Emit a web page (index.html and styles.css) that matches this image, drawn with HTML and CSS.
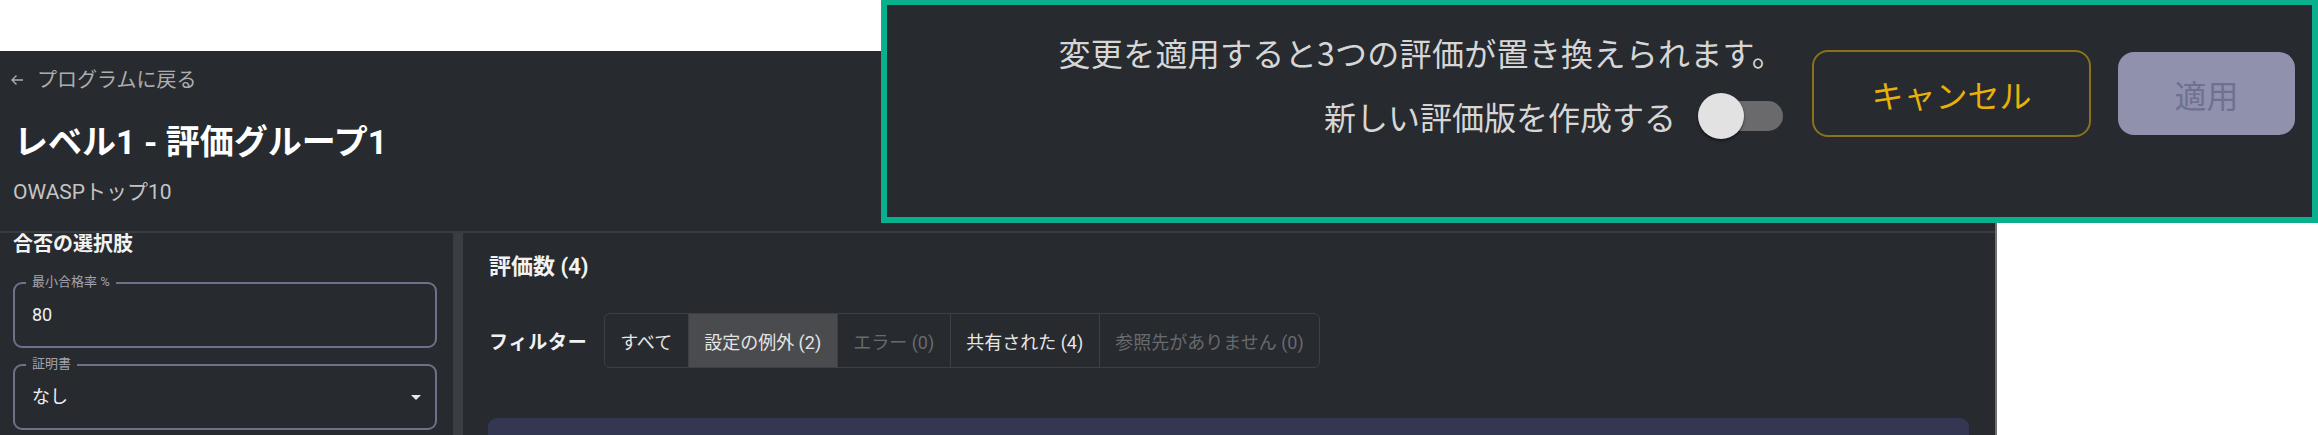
FILE: index.html
```html
<!DOCTYPE html>
<html lang="ja">
<head>
<meta charset="utf-8">
<title>レベル1 - 評価グループ1</title>
<link rel="stylesheet" href="styles.css">
</head>
<body>
<div class="stage">
  <div class="page">
    <header class="page-header">
      <a class="back-link" href="#">
        <svg class="back-arrow" width="14" height="14" viewBox="0 0 14 14" aria-hidden="true"><path d="M13 7H2M6.5 2.5L2 7l4.5 4.5" fill="none" stroke="currentColor" stroke-width="1.4"/></svg>
        <span>プログラムに戻る</span>
      </a>
      <h1 class="title">レベル1 - 評価グループ1</h1>
      <div class="subtitle">OWASPトップ10</div>
    </header>
    <div class="content">
      <aside class="left-col">
        <h2 class="section-title">合否の選択肢</h2>
        <div class="field">
          <span class="field-label">最小合格率 %</span>
          <span class="field-value">80</span>
        </div>
        <div class="field field-select">
          <span class="field-label">証明書</span>
          <span class="field-value">なし</span>
          <svg class="caret" width="10" height="5" viewBox="0 0 10 5" aria-hidden="true"><path d="M0 0h10L5 5z" fill="currentColor"/></svg>
        </div>
      </aside>
      <div class="splitter"></div>
      <main class="right-col">
        <h2 class="count-title">評価数 (4)</h2>
        <div class="filter-row">
          <span class="filter-label">フィルター</span>
          <div class="seg-group">
            <span class="seg">すべて</span>
            <span class="seg seg-selected">設定の例外 (2)</span>
            <span class="seg seg-disabled">エラー (0)</span>
            <span class="seg">共有された (4)</span>
            <span class="seg seg-disabled">参照先がありません (0)</span>
          </div>
        </div>
        <div class="card"></div>
      </main>
    </div>
  </div>

  <div class="callout">
    <div class="callout-text">
      <div class="callout-line callout-line-first">変更を適用すると3つの評価が置き換えられます。</div>
      <div class="callout-toggle-row">
        <span class="callout-line">新しい評価版を作成する</span>
        <span class="switch"><span class="switch-track"></span><span class="switch-thumb"></span></span>
      </div>
    </div>
    <button class="btn btn-cancel">キャンセル</button>
    <button class="btn btn-apply" disabled>適用</button>
  </div>
</div>
</body>
</html>
```

FILE: styles.css
```css
* { box-sizing: border-box; }

html, body {
  margin: 0;
  padding: 0;
  background: #ffffff;
}

body {
  width: 2318px;
  height: 435px;
  overflow: hidden;
  font-family: Roboto, "Noto Sans CJK JP", sans-serif;
}

.stage {
  position: relative;
  width: 2318px;
  height: 435px;
  padding-top: 51px;
}

.page {
  width: 1997px;
  height: 384px;
  background: #272a2f;
  border-right: 2px solid #6f7175;
  display: flex;
  flex-direction: column;
  overflow: hidden;
}

/* header */
.page-header {
  height: 182px;
  padding: 16px 0 0 10px;
  border-bottom: 2px solid #393c41;
  flex: none;
}

.back-link {
  display: flex;
  align-items: center;
  gap: 13px;
  color: #adadad;
  text-decoration: none;
  font-size: 20px;
  line-height: 26px;
}

.back-arrow { display: block; }

.title {
  margin: 28px 0 0 4px;
  font-size: 34px;
  line-height: 42px;
  font-weight: 700;
  color: #ffffff;
}

.subtitle {
  margin: 16px 0 0 3px;
  font-size: 21px;
  line-height: 26px;
  color: #c4c4c4;
}

/* content */
.content {
  flex: 1;
  display: flex;
  min-height: 0;
}

.left-col {
  width: 453px;
  flex: none;
  padding: 0 16px 0 13px;
}

.section-title {
  margin: 0;
  font-size: 20px;
  line-height: 22px;
  font-weight: 700;
  color: #f2f2f2;
}

.field {
  position: relative;
  height: 66px;
  margin-top: 27px;
  border: 2px solid #6f7189;
  border-radius: 9px;
  display: flex;
  align-items: center;
  padding: 0 14px 0 17px;
}

.field + .field { margin-top: 16px; }

.field-label {
  position: absolute;
  top: -10px;
  left: 11px;
  padding: 0 6px;
  background: #272a2f;
  font-size: 13px;
  line-height: 16px;
  color: #a3a4ad;
}

.field-value {
  flex: 1;
  font-size: 18px;
  line-height: 24px;
  color: #f0f0f0;
}

.caret {
  display: block;
  color: #e8e8e8;
}

.splitter {
  width: 10px;
  flex: none;
  background: #3a3d42;
}

.right-col {
  flex: 1;
  padding: 20px 26px 0 25px;
}

.count-title {
  margin: 0 0 0 1px;
  font-size: 22px;
  line-height: 28px;
  font-weight: 700;
  color: #f2f2f2;
}

.filter-row {
  margin-top: 32px;
  display: flex;
  align-items: center;
  gap: 16px;
  padding-left: 1px;
}

.filter-label {
  font-size: 19px;
  font-weight: 700;
  color: #f2f2f2;
  letter-spacing: 0.8px;
}

.seg-group {
  display: flex;
  height: 55px;
  border: 1px solid #3d4045;
  border-radius: 6px;
  overflow: hidden;
}

.seg {
  display: flex;
  align-items: center;
  padding: 0 15.5px;
  font-size: 18px;
  color: #e6e6e6;
  border-left: 1px solid #3d4045;
}

.seg:first-child { border-left: none; }

.seg-selected {
  background: #4a4b4f;
  color: #e4e4e4;
}

.seg-disabled { color: #676a6e; }

.card {
  margin-top: 50px;
  height: 40px;
  background: #343751;
  border-radius: 9px 9px 0 0;
}

/* callout overlay */
.callout {
  position: absolute;
  top: 0;
  left: 881px;
  width: 1437px;
  height: 223px;
  background: #272a2f;
  border: 6px solid #0aaf8e;
  border-top-width: 5px;
  display: flex;
  justify-content: flex-end;
  align-items: flex-start;
  padding-right: 17px;
}

.callout-text {
  margin-top: 27px;
  display: flex;
  flex-direction: column;
  align-items: flex-end;
  gap: 20px;
}

.callout-line {
  font-size: 32px;
  line-height: 40px;
  color: #d6d6d6;
  font-family: "Noto Sans CJK JP", sans-serif;
}

.callout-line-first {
  letter-spacing: 0.3px;
  margin-right: 6px;
}

.callout-toggle-row {
  display: flex;
  align-items: center;
  gap: 22px;
  padding-right: 7px;
}

.switch {
  position: relative;
  display: block;
  width: 85px;
  height: 48px;
}

.switch-track {
  position: absolute;
  left: 6px;
  right: 0;
  top: 9px;
  height: 30px;
  border-radius: 15px;
  background: #6a6a6c;
}

.switch-thumb {
  position: absolute;
  left: 0;
  top: 1px;
  width: 46px;
  height: 46px;
  border-radius: 50%;
  background: #e2e2e2;
  box-shadow: 0 2px 3px rgba(0,0,0,0.45);
}

.btn {
  font-family: "Noto Sans CJK JP", sans-serif;
  font-size: 32px;
  border-radius: 16px;
}

.btn-cancel {
  width: 279px;
  height: 87px;
  margin-top: 45px;
  margin-left: 22px;
  background: transparent;
  border: 2px solid #8a7218;
  color: #e8b109;
}

.btn-apply {
  width: 177px;
  height: 83px;
  margin-top: 47px;
  margin-left: 27px;
  background: #8f91ad;
  border: none;
  color: #6e7190;
}
```
